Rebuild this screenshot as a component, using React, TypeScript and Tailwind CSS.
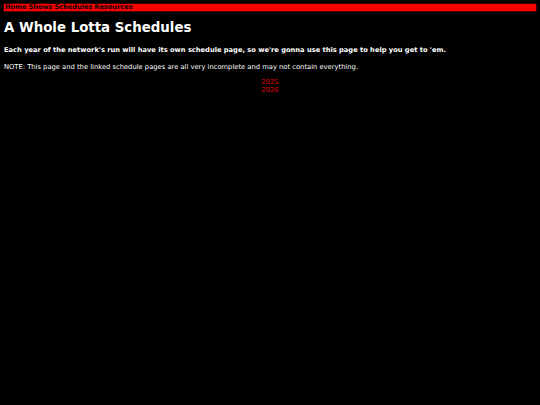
export default function App() {
  return (
    <div
      className="min-h-[405px] w-full bg-black px-[3px] pt-[3px] text-white"
      style={{ fontFamily: '"DejaVu Sans", Verdana, sans-serif' }}
    >
      <nav className="flex h-[9px] items-center gap-[2px] border border-[#400000] bg-[#ff0000] px-[1px] text-[6.6px] font-bold leading-none text-black">
        <span>Home</span>
        <span>Shows</span>
        <span>Schedules</span>
        <span>Resources</span>
      </nav>
      <h1 className="mt-[8px] pl-[1px] text-[13.35px] font-bold leading-[16px]">A Whole Lotta Schedules</h1>
      <p className="mt-[10px] pl-[1px] text-[6.7px] font-bold leading-[8px]">
        Each year of the network's run will have its own schedule page, so we're gonna use this page to help you get to 'em.
      </p>
      <p className="mt-[9px] pl-[1px] text-[6.75px] leading-[8px]">
        NOTE: This page and the linked schedule pages are all very incomplete and may not contain everything.
      </p>
      <div className="mt-[7px] flex flex-col items-center text-[6.8px] leading-[8px] text-[#e00000]">
        <a>2025</a>
        <a>2026</a>
      </div>
    </div>
  );
}
